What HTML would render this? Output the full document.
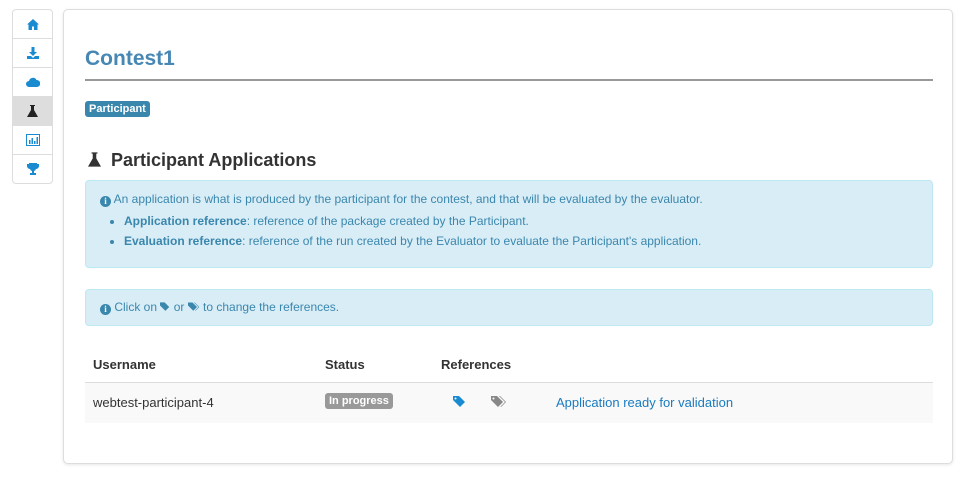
<!DOCTYPE html>
<html><head><style>
body{margin:0;background:#fff;font-family:"Liberation Sans",sans-serif;width:969px;height:483px;overflow:hidden;position:relative;color:#333}
.side{position:absolute;left:12px;top:9px;width:39px;border:1px solid #ddd;border-radius:4px;background:#fff}
.side div{height:28px;border-bottom:1px solid #ddd;display:flex;align-items:center;justify-content:center}
.side div:last-child{border-bottom:none}
.side .act{background:#ddd}
.panel{position:absolute;left:63px;top:9px;width:888px;height:453px;border:1px solid #ddd;border-radius:5px;box-shadow:0 1px 3px rgba(0,0,0,.1)}
h1{position:absolute;left:21px;top:37px;margin:0;font-size:21px;color:#4787b3;font-weight:bold}
.hr{position:absolute;left:21px;top:69px;width:848px;height:2px;background:#999}
.lbl{position:absolute;left:21px;top:91px;background:#3a87ad;color:#fff;font-size:11px;font-weight:bold;padding:2px 4px;border-radius:3px}
h2{position:absolute;left:24px;top:140px;margin:0;font-size:18px;font-weight:bold;color:#333}
.al{position:absolute;left:21px;width:846px;background:#d9edf7;border:1px solid #bce8f1;border-radius:4px;color:#3a87ad;font-size:12px}
.al ul{margin:4px 0 0;padding-left:38px;line-height:20px}
.i{display:inline-block;width:11px;height:11px;border-radius:50%;background:#3a87ad;color:#fff;font-size:9px;font-weight:bold;text-align:center;line-height:11px;font-family:"Liberation Serif",serif;vertical-align:-1px}
.th{position:absolute;top:347px;font-size:13px;font-weight:bold}
.row{position:absolute;left:21px;top:372px;width:848px;height:40px;background:#f9f9f9;border-top:1px solid #ddd;font-size:13px}
.row span{position:absolute;top:12px}
</style></head><body>
<div class="side">
<div><svg width="12" height="11" viewBox="0 0 12 11"><path d="M6 0L0 5.5h1.5V11h3.5V7.5h2V11h3.5V5.5H12z" fill="#1a8bd0"/></svg></div>
<div><svg width="12" height="12" viewBox="0 0 12 12"><path d="M4.5 0h3v5h2.5L6 9 2 5h2.5z M0 9h4l2 2 2-2h4v3H0z" fill="#1a8bd0"/></svg></div>
<div><svg width="14" height="10" viewBox="0 0 14 10"><path d="M3 10a3 3 0 0 1 0-6 4 4 0 0 1 7.5-1A3.5 3.5 0 0 1 11 10z" fill="#1a8bd0"/></svg></div>
<div class="act"><svg width="11" height="12" viewBox="0 0 11 12"><path d="M3 0h5v1H7v4l4 7H0l4-7V1H3z" fill="#222"/></svg></div>
<div><svg width="14" height="12" viewBox="0 0 14 12"><rect x=".5" y=".5" width="13" height="11" fill="none" stroke="#1a8bd0"/><path d="M3 6h1.5v4H3zM5.5 4H7v6H5.5zM8 7h1.5v3H8zM10.5 3H12v7h-1.5z" fill="#1a8bd0"/></svg></div>
<div><svg width="12" height="12" viewBox="0 0 12 12"><path d="M2 0h8v1h2v2a3 3 0 0 1-3 3 3 3 0 0 1-2 2v2h2v2H3v-2h2V8a3 3 0 0 1-2-2 3 3 0 0 1-3-3V1h2z" fill="#1a8bd0"/></svg></div>
</div>
<div class="panel">
<h1>Contest1</h1><div class="hr"></div>
<div class="lbl">Participant</div>
<h2><svg width="13" height="15" viewBox="0 0 11 12" style="margin-right:10px;vertical-align:-1px"><path d="M3 0h5v1H7v4l4 7H0l4-7V1H3z" fill="#333"/></svg>Participant Applications</h2>
<div class="al" style="top:170px;height:86px"><div style="padding:11px 0 0 14px"><span class="i">i</span> An application is what is produced by the participant for the contest, and that will be evaluated by the evaluator.</div>
<ul><li><b>Application reference</b>: reference of the package created by the Participant.</li><li><b>Evaluation reference</b>: reference of the run created by the Evaluator to evaluate the Participant's application.</li></ul></div>
<div class="al" style="top:279px;height:35px"><div style="padding:10px 0 0 14px"><span class="i">i</span> Click on <svg width="10" height="10" viewBox="0 0 13 12" style="vertical-align:-1px"><path d="M0 0h6l6 6-5 5-7-7z" fill="#3a87ad"/></svg> or <svg width="12" height="10" viewBox="0 0 16 12" style="vertical-align:-1px"><path d="M0 0h6l6 6-5 5-7-7z" fill="#3a87ad"/><path d="M8 0h1l6 6-5 5-.5-.5 4.5-4.5z" fill="#3a87ad"/></svg> to change the references.</div></div>
<div class="th" style="left:29px">Username</div><div class="th" style="left:261px">Status</div><div class="th" style="left:377px">References</div>
<div class="row"><span style="left:8px">webtest-participant-4</span>
<span style="left:240px;top:10px;background:#999;color:#fff;font-size:11px;font-weight:bold;padding:2px 4px;border-radius:3px">In progress</span>
<span style="left:368px;top:13px"><svg width="13" height="12" viewBox="0 0 13 12"><path d="M0 0h6l6 6-5 5-7-7z" fill="#1a8bd0"/><circle cx="2.5" cy="2.5" r="1" fill="#f9f9f9"/></svg></span>
<span style="left:406px;top:13px"><svg width="16" height="12" viewBox="0 0 16 12"><path d="M0 0h6l6 6-5 5-7-7z" fill="#888"/><path d="M8 0h1l6 6-5 5-.5-.5 4.5-4.5z" fill="#888"/><circle cx="2.5" cy="2.5" r="1" fill="#f9f9f9"/></svg></span>
<span style="left:471px;color:#1a7bbf">Application ready for validation</span></div>
</div>
</body></html>
